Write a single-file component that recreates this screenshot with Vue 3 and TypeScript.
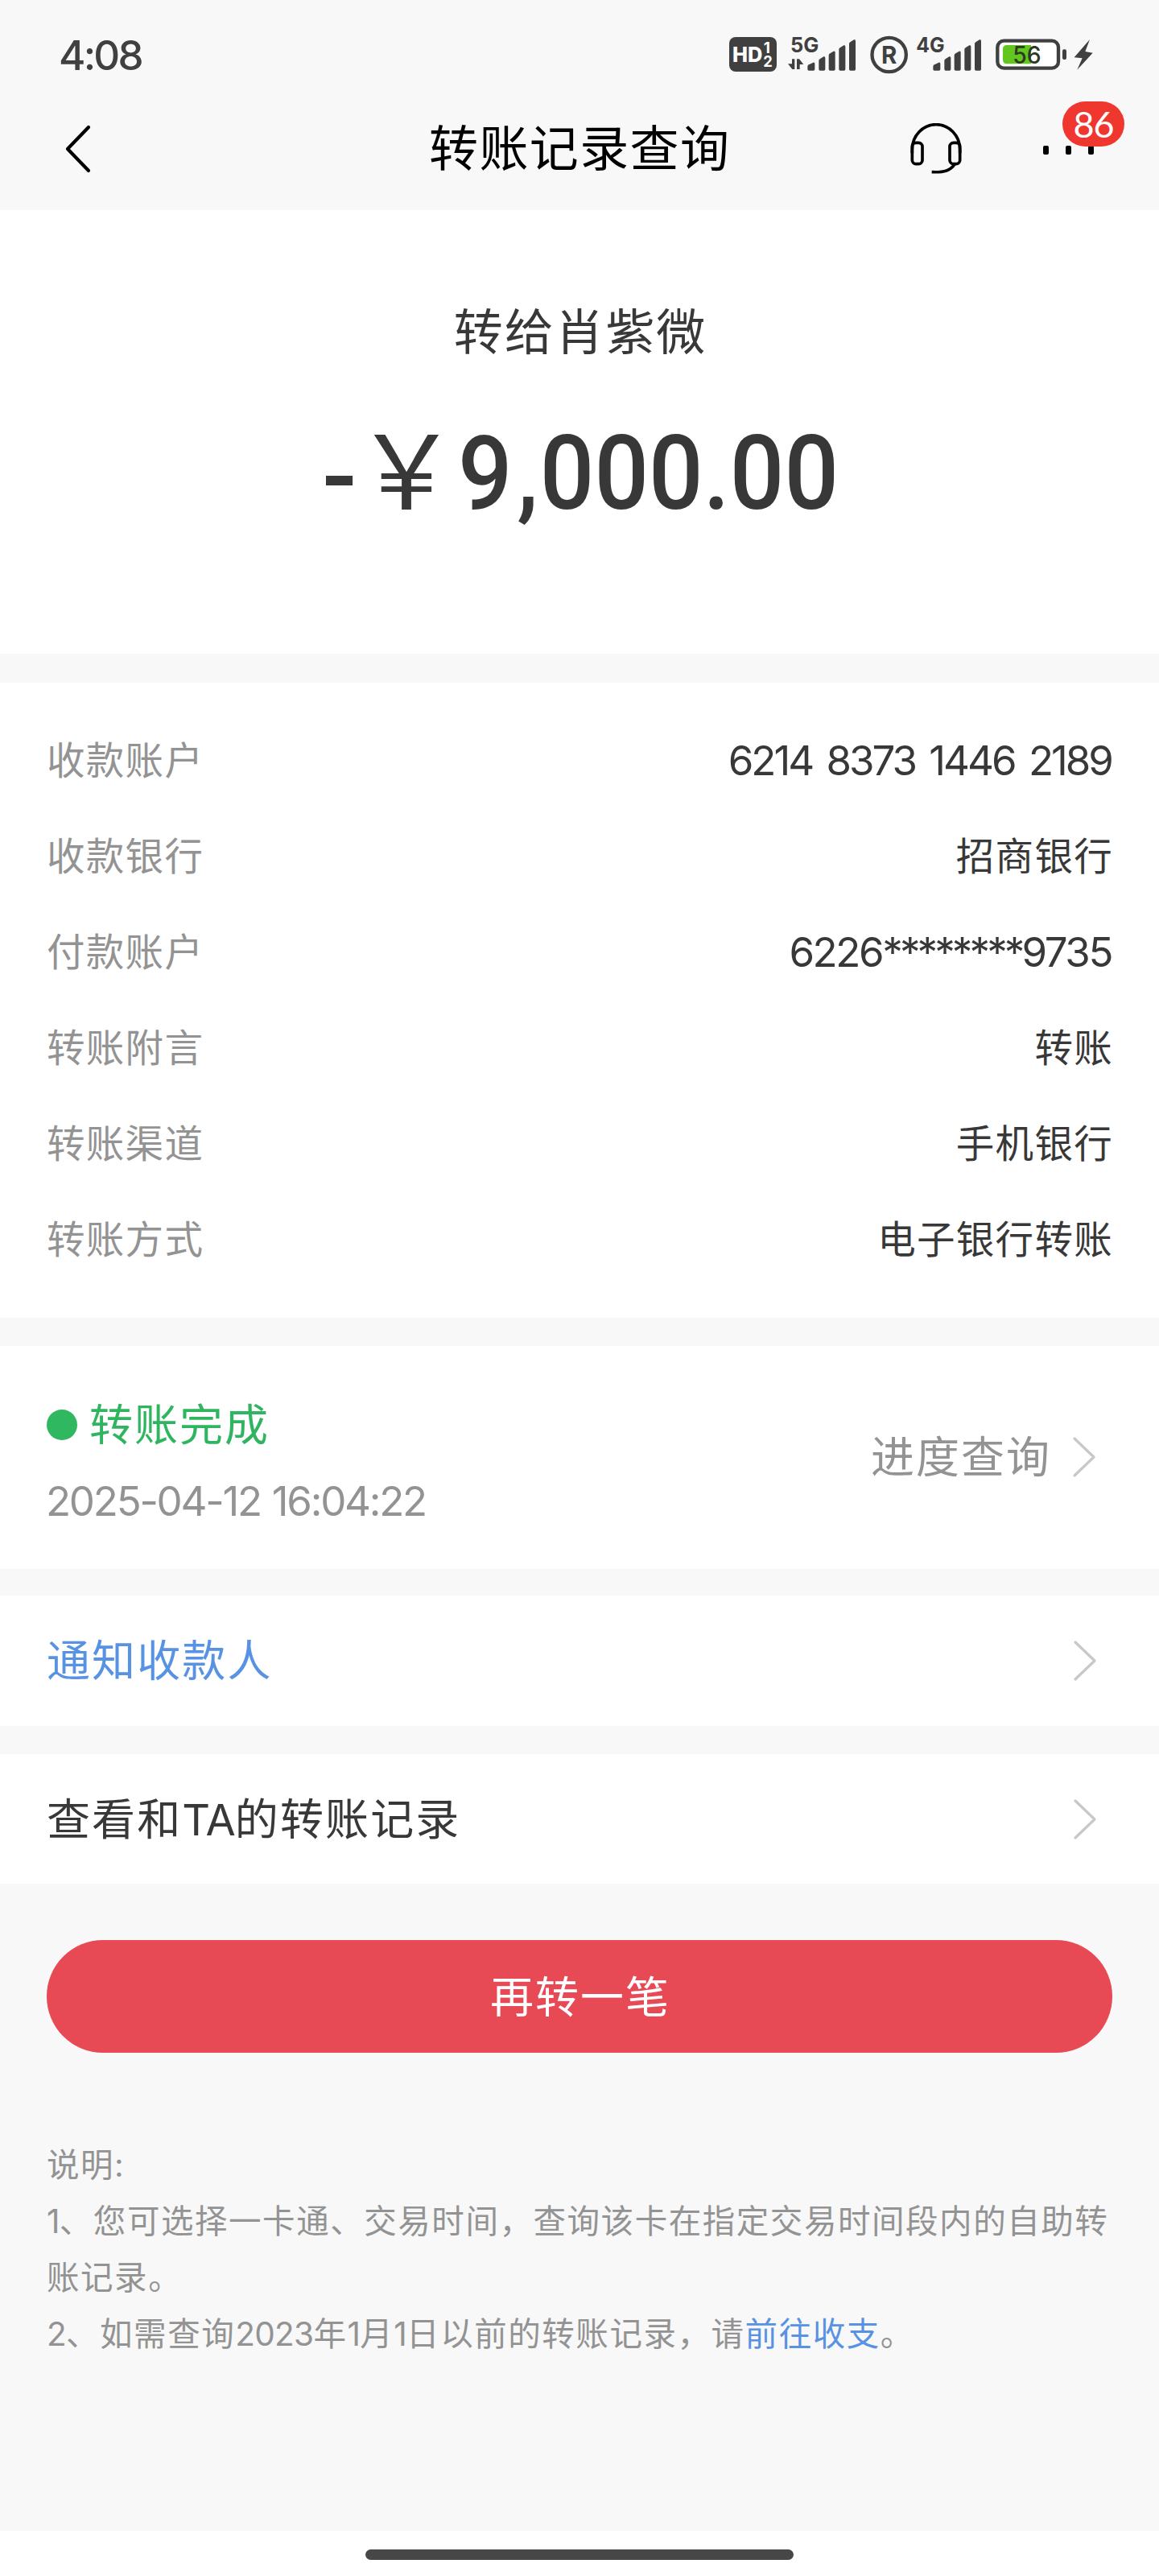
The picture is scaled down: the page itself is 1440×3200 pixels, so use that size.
<script setup lang="ts">
interface Detail {
  label: string
  value: string
  kind?: 'card' | 'masked'
}

const details: Detail[] = [
  { label: '收款账户', value: '6214 8373 1446 2189', kind: 'card' },
  { label: '收款银行', value: '招商银行' },
  { label: '付款账户', value: '6226********9735', kind: 'masked' },
  { label: '转账附言', value: '转账' },
  { label: '转账渠道', value: '手机银行' },
  { label: '转账方式', value: '电子银行转账' },
]

// Splits a masked number so the asterisks can be tracked tighter than the digits
const parts = (value: string) => value.split(/(\*+)/)

// Left edge, right edge and top of each signal bar
const signalBars = [
  [0, 27, 172],
  [42, 66, 150],
  [79, 103, 130],
  [117, 141, 108],
  [155, 179, 87],
]
const barPath = ([l, r, t]: number[]) =>
  `M${l} 198V${t + 16}Q${l} ${t + 12} ${l + 5} ${t + 9}L${r - 6} ${t + 1}Q${r} ${t - 1} ${r} ${t + 6}V198Q${r} 203 ${r - 5} 203H${l + 5}Q${l} 203 ${l} 198Z`
</script>

<template>
  <div class="screen">
    <header class="top">
      <div class="status">
        <span class="time">4:08</span>
        <svg class="status-icons" viewBox="0 0 1560 300" fill="#404040">
          <rect x="78" y="78" width="177" height="129" rx="24" />
          <g fill="#fff" font-weight="700">
            <text x="90" y="170" font-size="76" font-weight="800" textLength="112" lengthAdjust="spacingAndGlyphs">HD</text>
            <text x="206" y="137" font-size="57">1</text>
            <text x="205" y="190" font-size="55">2</text>
          </g>
          <text x="306" y="135" font-size="78" font-weight="700" textLength="106" lengthAdjust="spacingAndGlyphs">5G</text>
          <path d="M312 160h10v38h-9l-16-20h15zM330 198v-38h9l16 20h-14v18z" />
          <g transform="translate(370 0)">
            <path v-for="(b, i) in signalBars" :key="i" :d="barPath(b)" />
          </g>
          <circle cx="674" cy="144" r="63.5" fill="none" stroke="#404040" stroke-width="13" />
          <text x="645" y="178" font-size="90" font-weight="700" textLength="58" lengthAdjust="spacingAndGlyphs">R</text>
          <text x="775" y="135" font-size="78" font-weight="700" textLength="106" lengthAdjust="spacingAndGlyphs">4G</text>
          <g transform="translate(838 0)">
            <path v-for="(b, i) in signalBars" :key="i" :d="barPath(b)" />
          </g>
          <rect x="1078" y="92" width="227" height="102" rx="24" fill="#fff" stroke="#404040" stroke-width="13" />
          <path d="M1203 108v70h-90q-15 0-15-15v-40q0-15 15-15z" fill="#62c61e" />
          <text x="1135" y="178" font-size="90" font-weight="500" fill="#2c3a24" textLength="106" lengthAdjust="spacingAndGlyphs">56</text>
          <rect x="1320" y="124" width="15" height="38" rx="6" />
          <path d="M1422 87L1364 154L1394 157L1375 200L1433 137L1405 132Z" />
        </svg>
      </div>
      <nav class="nav">
        <svg class="back" viewBox="0 0 40 64" fill="none" stroke="#000" stroke-width="4.2" stroke-linecap="round" stroke-linejoin="round">
          <path d="M32 5L6 32L32 59" />
        </svg>
        <h1 class="title">转账记录查询</h1>
        <svg class="headset" viewBox="0 0 192 192" fill="none" stroke="#000" stroke-width="11">
          <path d="M7 112V98A89 93 0 0 1 185 98V112" />
          <rect x="7" y="73" width="38" height="79" rx="14" />
          <rect x="147" y="73" width="38" height="79" rx="14" />
          <path d="M166 152C150 176 128 184 80 182" />
        </svg>
        <div class="more">
          <i /><i /><i />
          <span class="badge">86</span>
        </div>
      </nav>
    </header>

    <section class="summary">
      <p class="payee">转给肖紫微</p>
      <p class="amount"><span class="minus">-</span><span class="yen">￥</span><span class="digits">9<span class="comma">,</span>000.00</span></p>
    </section>

    <section class="details">
      <div v-for="d in details" :key="d.label" class="row">
        <span class="label">{{ d.label }}</span>
        <span class="value" :class="d.kind"><span v-for="(p, i) in parts(d.value)" :key="i" :class="{ stars: p[0] === '*' }">{{ p }}</span></span>
      </div>
    </section>

    <section class="state">
      <div>
        <p class="done"><i class="dot" /><span class="lift">转账完成</span></p>
        <p class="date">2025-04-12 16:04:22</p>
      </div>
      <div class="progress">
        <span class="lift">进度查询</span>
        <svg class="chev" viewBox="0 0 30 52"><path d="M3 3L27 26L3 49" /></svg>
      </div>
    </section>

    <section class="link-row notify">
      <span class="lift">通知收款人</span>
      <svg class="chev" viewBox="0 0 30 52"><path d="M3 3L27 26L3 49" /></svg>
    </section>

    <section class="link-row history">
      <span class="lift">查看和<span class="ta">TA</span>的转账记录</span>
      <svg class="chev" viewBox="0 0 30 52"><path d="M3 3L27 26L3 49" /></svg>
    </section>

    <button class="again">再转一笔</button>

    <div class="notes">
      <p>说明:</p>
      <p><span class="num">1</span>、您可选择一卡通、交易时间，查询该卡在指定交易时间段内的自助转<br />账记录。</p>
      <p><span class="num">2</span>、如需查询<span class="num">2023</span>年<span class="num">1</span>月<span class="num">1</span>日以前的转账记录，请<a>前往收支</a>。</p>
    </div>

    <footer class="home"><i /></footer>
  </div>
</template>

<style>
body {
  margin: 0;
  background: #f8f8f8;
}
</style>

<style scoped>
.screen {
  width: 1440px;
  height: 3200px;
  display: flex;
  flex-direction: column;
  background: #f8f8f8;
  color: #383838;
  font-family: Inter, "Noto Sans CJK SC", sans-serif;
  overflow: hidden;
}
p, h1 {
  margin: 0;
  font-weight: 400;
}
section {
  box-sizing: border-box;
  background: #fff;
  flex: none;
}
.top {
  height: 261px;
  flex: none;
}
.status {
  height: 120px;
  display: flex;
  justify-content: space-between;
  padding: 0 40px 0 73px;
}
.time {
  font-size: 51px;
  line-height: 137px;
  font-weight: 500;
  letter-spacing: -2.8px;
  color: #404040;
}
.status-icons {
  width: 520px;
  height: 100px;
  margin-top: 20px;
}
.nav {
  height: 130px;
  display: flex;
  align-items: center;
  padding: 0 43px 0 78px;
}
.back {
  width: 40px;
  height: 64px;
}
.title {
  flex: 1;
  padding-left: 415px;
  font-size: 61px;
  line-height: 90px;
  letter-spacing: 1.4px;
  color: #000;
  white-space: nowrap;
}
.headset {
  width: 64px;
  height: 64px;
  margin-right: 101px;
}
.more {
  position: relative;
  width: 101px;
  height: 12px;
  display: flex;
  gap: 21px;
  margin-top: 3px;
}
.more i {
  width: 7px;
  height: 11px;
  border-radius: 2px;
  background: #000;
}
.badge {
  position: absolute;
  left: 24px;
  top: -55px;
  width: 77px;
  height: 56px;
  border-radius: 28px;
  background: #ef372f;
  color: #fff;
  font-family: Lato, sans-serif;
  font-size: 45px;
  line-height: 56px;
  letter-spacing: -1px;
  text-align: center;
}
.summary {
  height: 551px;
  margin-bottom: 36px;
  padding-top: 107px;
  text-align: center;
}
.payee {
  padding-left: 2px;
  font-size: 61px;
  line-height: 90px;
  letter-spacing: 1.9px;
}
.amount {
  display: flex;
  height: 150px;
  margin-top: 55px;
  padding-left: 400px;
  font-family: Roboto, "Noto Sans CJK SC", sans-serif;
  font-size: 128px;
  line-height: 150px;
  font-weight: 500;
  text-align: left;
}
.minus {
  width: 41px;
  line-height: 159px;
}
.yen {
  width: 128px;
  line-height: 153px;
  font-weight: 400;
}
.digits {
  transform: scaleX(0.93);
  transform-origin: left;
}
.comma {
  margin: 0 2px 0 6px;
}
.details {
  height: 789px;
  margin-bottom: 35px;
  padding: 34px 58px 0;
}
.row {
  height: 119px;
  display: flex;
  justify-content: space-between;
  align-items: center;
  font-size: 47.5px;
  letter-spacing: 1.3px;
}
.label {
  color: #939393;
}
.value {
  margin-right: -1px;
}
.card,
.masked {
  padding-top: 6px;
  margin-right: 1px;
  font-size: 51px;
  letter-spacing: -3px;
  word-spacing: 6px;
}
.masked {
  letter-spacing: -2.4px;
}
.stars {
  letter-spacing: -3.9px;
}
.state {
  height: 277px;
  margin-bottom: 33px;
  padding: 58px 78px 0 58px;
  display: flex;
  justify-content: space-between;
}
.lift {
  padding-bottom: 7px;
}
.done {
  display: flex;
  align-items: center;
  height: 80px;
  font-size: 54px;
  letter-spacing: 2px;
  color: #2fb560;
}
.dot {
  width: 38px;
  height: 38px;
  margin-right: 15px;
  border-radius: 50%;
  background: #30b861;
}
.date {
  font-size: 51px;
  line-height: 80px;
  margin-top: 15px;
  margin-left: -1px;
  letter-spacing: -2.25px;
  word-spacing: 2px;
  color: #939393;
}
.progress {
  height: 160px;
  display: flex;
  align-items: center;
  font-size: 54px;
  letter-spacing: 2px;
  color: #939393;
}
.progress .chev {
  margin-left: 26px;
}
.chev {
  width: 30px;
  height: 52px;
  fill: none;
  stroke: #c8c8c8;
  stroke-width: 3.2;
  stroke-linecap: round;
  stroke-linejoin: round;
}
.link-row {
  display: flex;
  align-items: center;
  justify-content: space-between;
  padding: 0 77px 0 58px;
  font-size: 54px;
  letter-spacing: 2.1px;
}
.notify {
  height: 162px;
  margin-bottom: 35px;
  color: #5892e3;
}
.history {
  height: 161px;
}
.ta {
  letter-spacing: -1px;
}
.again {
  flex: none;
  height: 140px;
  margin: 70px 58px 0;
  padding: 0 0 6px 2px;
  border: 0;
  border-radius: 70px;
  background: #e74a55;
  color: #fff;
  font: inherit;
  font-size: 54px;
  letter-spacing: 2px;
}
.notes {
  margin: 105px 58px 0;
  font-size: 40.5px;
  line-height: 70px;
  letter-spacing: 1.55px;
  color: #939393;
  white-space: nowrap;
}
.num {
  letter-spacing: -0.7px;
}
.notes a {
  color: #5892e3;
}
.home {
  height: 56px;
  margin-top: auto;
  background: #fff;
  display: flex;
  justify-content: center;
}
.home i {
  width: 532px;
  height: 13px;
  margin-top: 23px;
  border-radius: 7px;
  background: #474747;
}
</style>
